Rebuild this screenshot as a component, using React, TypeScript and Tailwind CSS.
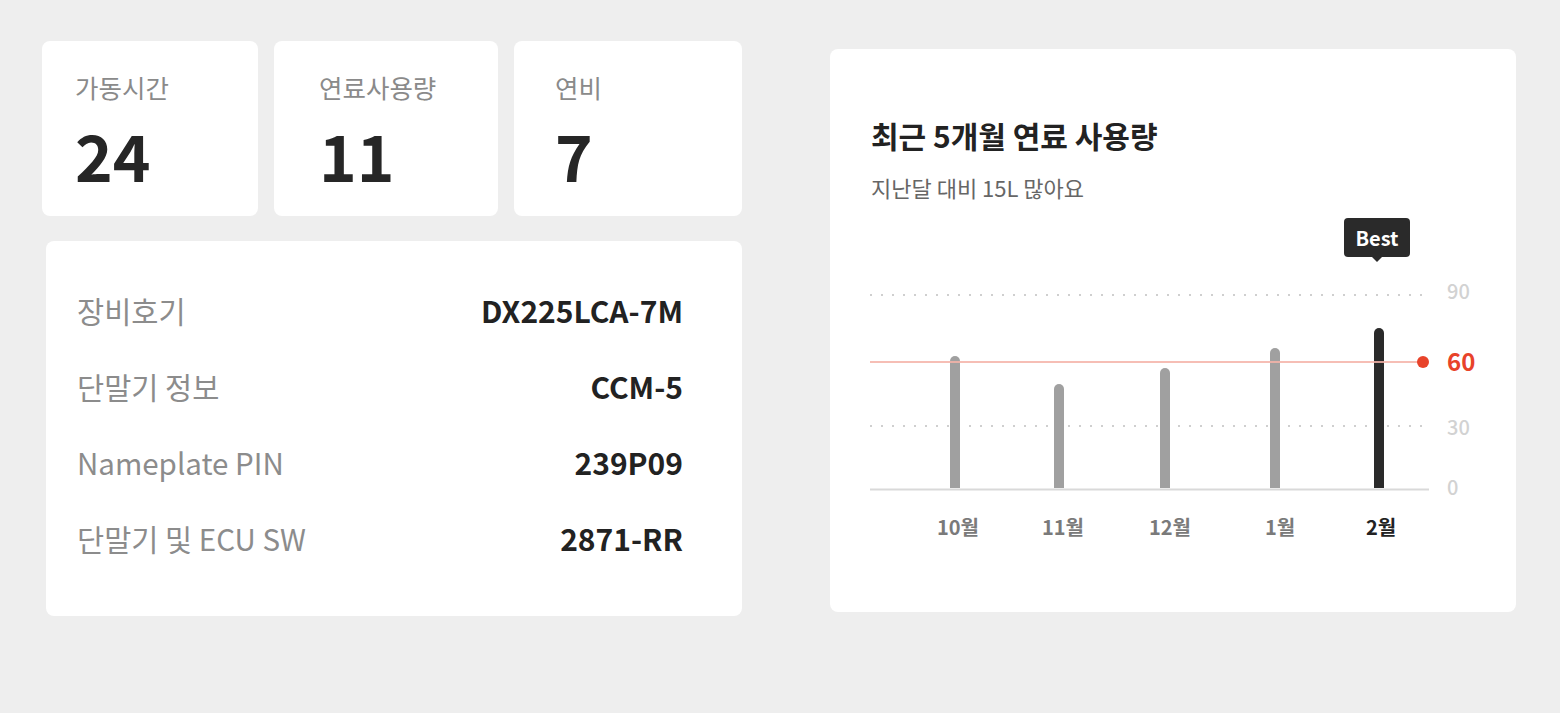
import React from "react";

const FONT = { fontFamily: '"Noto Sans CJK KR", "Noto Sans", sans-serif' };

const stats = [
  { label: "가동시간", value: "24", w: "w-[216px]", pl: "pl-[33px]" },
  { label: "연료사용량", value: "11", w: "w-[224px]", pl: "pl-[45px]" },
  { label: "연비", value: "7", w: "w-[228px]", pl: "pl-[41px]" },
];

const info = [
  { label: "장비호기", value: "DX225LCA-7M" },
  { label: "단말기 정보", value: "CCM-5" },
  { label: "Nameplate PIN", value: "239P09" },
  { label: "단말기 및 ECU SW", value: "2871-RR" },
];

const bars = [
  { m: "10월", x: 85, top: 147, lx: 88, active: false },
  { m: "11월", x: 189, top: 175, lx: 193, active: false },
  { m: "12월", x: 295, top: 159, lx: 300, active: false },
  { m: "1월", x: 405, top: 139, lx: 410, active: false },
  { m: "2월", x: 509, top: 119, lx: 511, active: true },
];

function Chart() {
  return (
    <div className="relative ml-[-1px] h-[340px] w-[610px]">
      <svg className="absolute left-0 top-0" width="610" height="300">
        <line x1="0" y1="86" x2="555" y2="86" stroke="#cfcfcf" strokeWidth="2" strokeDasharray="2 9" />
        <line x1="0" y1="217" x2="555" y2="217" stroke="#cfcfcf" strokeWidth="2" strokeDasharray="2 9" />
        <line x1="0" y1="280.5" x2="559" y2="280.5" stroke="#d9d9d9" strokeWidth="2" />
        {bars.map((b) => (
          <path
            key={b.m}
            d={`M${b.x - 5} 279 V${b.top + 5} A5 5 0 0 1 ${b.x + 5} ${b.top + 5} V279 Z`}
            fill={b.active ? "#2a2a2a" : "#a0a0a0"}
          />
        ))}
        <line x1="0" y1="153" x2="553" y2="153" stroke="#f5b3a8" strokeOpacity="0.85" strokeWidth="2" />
        <circle cx="553" cy="153" r="6" fill="#e8432a" />
      </svg>

      {/* tooltip */}
      <div className="absolute left-[474px] top-[9px] flex h-[39px] w-[66px] items-center justify-center rounded-[4px] bg-[#2a2a2a] text-[20px] font-bold leading-none text-white">
        Best
        <div className="absolute left-1/2 top-full h-0 w-0 -translate-x-1/2 border-x-[5px] border-t-[5px] border-x-transparent border-t-[#2a2a2a]" />
      </div>

      {/* y labels */}
      <div className="absolute left-[577px] top-[70px] text-[20px] font-medium leading-[24px] text-[#d2d2d2]">90</div>
      <div className="absolute left-[577px] top-[139px] text-[24px] font-bold leading-[26px] text-[#e8432a]">60</div>
      <div className="absolute left-[577px] top-[206px] text-[20px] font-medium leading-[24px] text-[#d2d2d2]">30</div>
      <div className="absolute left-[577px] top-[266px] text-[20px] font-medium leading-[24px] text-[#d2d2d2]">0</div>

      {/* month labels */}
      {bars.map((b) => (
        <div
          key={b.m}
          className={`absolute top-[306px] w-[60px] -translate-x-1/2 text-center text-[20px] font-bold leading-[24px] ${
            b.active ? "text-[#222222]" : "text-[#7a7a7a]"
          }`}
          style={{ left: b.lx }}
        >
          {b.m}
        </div>
      ))}
    </div>
  );
}

export default function App() {
  return (
    <div className="flex h-[713px] w-full bg-[#eeeeee] pl-[42px] pt-[41px]" style={FONT}>
      <div className="flex w-[700px] flex-col">
        <div className="flex gap-[16px]">
          {stats.map((s) => (
            <div key={s.label} className={`h-[175px] rounded-[8px] bg-white pt-[30px] ${s.w} ${s.pl}`}>
              <div className="text-[25.5px] leading-[32px] text-[#8a8a8a]">{s.label}</div>
              <div className="mt-[19px] text-[64px] font-bold leading-none text-[#262626]">{s.value}</div>
            </div>
          ))}
        </div>
        <div className="ml-[4px] mt-[25px] h-[375px] rounded-[8px] bg-white pb-[40px] pl-[31px] pr-[59px] pt-[31px]">
          {info.map((r) => (
            <div key={r.label} className="flex h-[76px] items-center justify-between">
              <span className="text-[29.5px] text-[#8c8c8c]">{r.label}</span>
              <span className="text-[30px] font-bold text-[#222222]">{r.value}</span>
            </div>
          ))}
        </div>
      </div>
      <div className="ml-[88px] mt-[8px] h-[563px] w-[686px] rounded-[8px] bg-white pl-[41px] pt-[68px]">
        <div className="text-[30px] font-bold leading-[36px] text-[#222222]">최근 5개월 연료 사용량</div>
        <div className="mt-[21px] text-[22px] leading-[26px] text-[#666666]">지난달 대비 15L 많아요</div>
        <div className="mt-[9px]">
          <Chart />
        </div>
      </div>
    </div>
  );
}
